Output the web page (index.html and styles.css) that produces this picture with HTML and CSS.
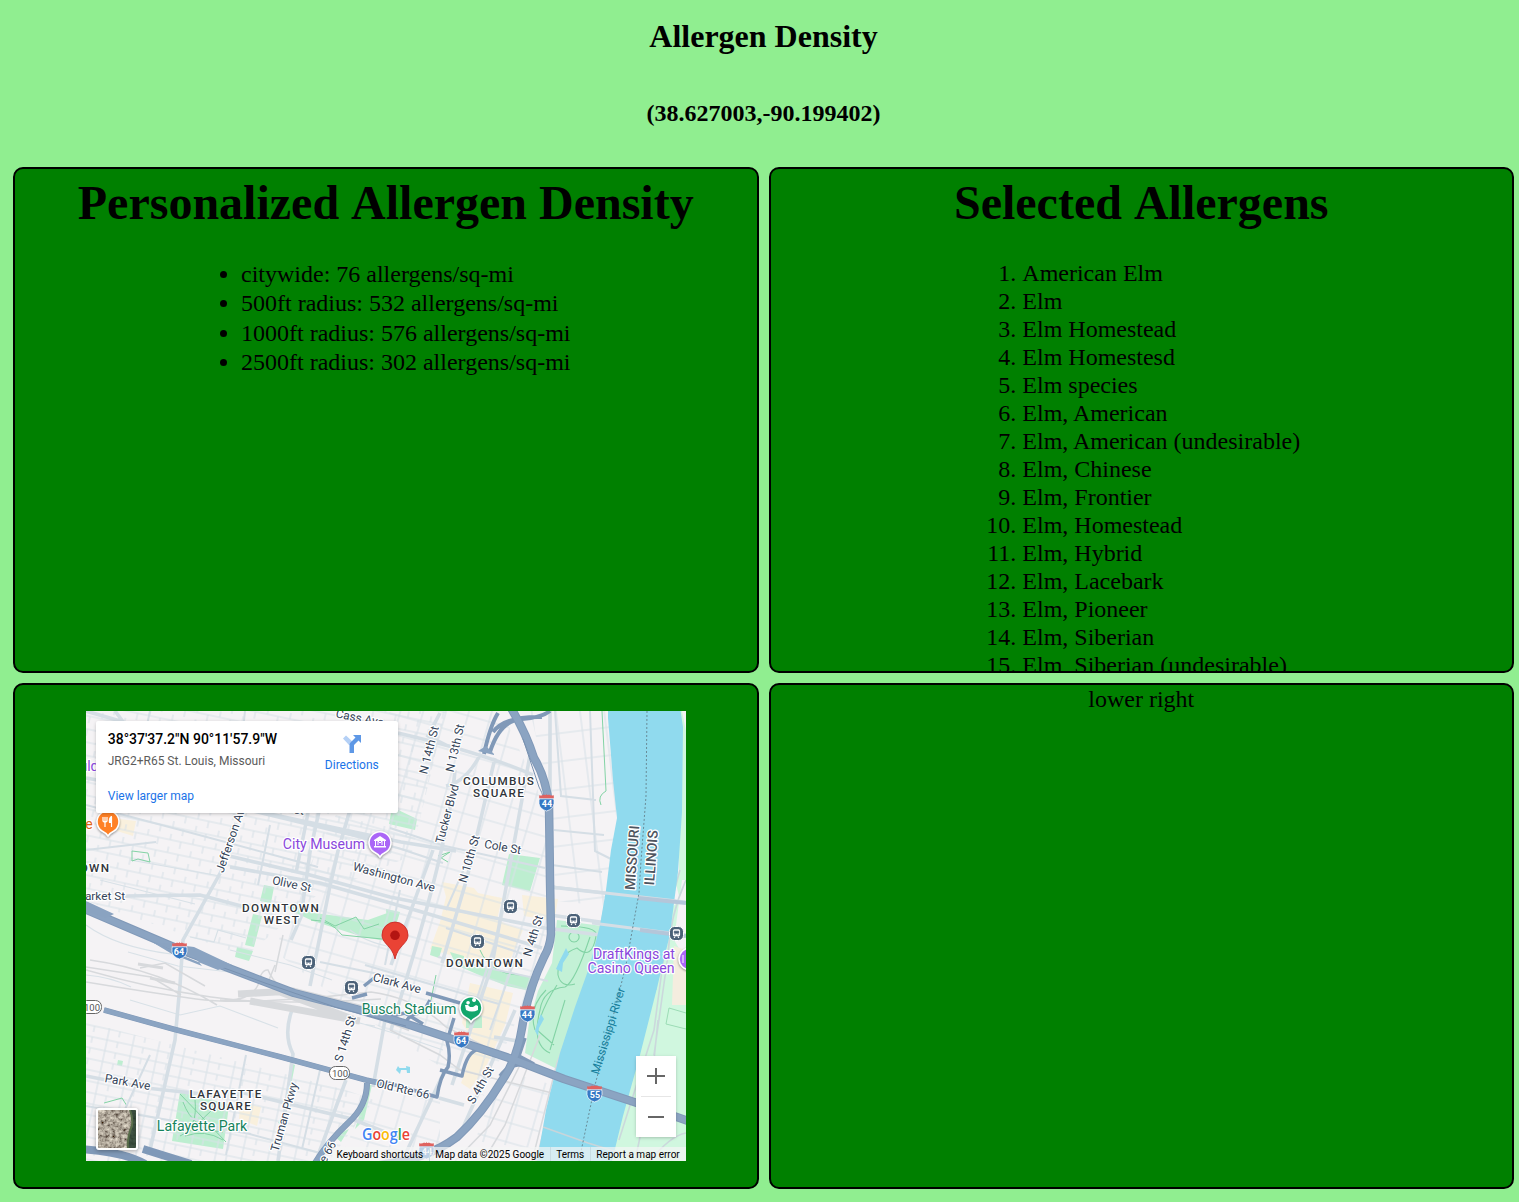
FILE: index.html
```html
<!DOCTYPE html>
<html lang="en">
<head>
<meta charset="utf-8">
<title>Allergen Density</title>
<link rel="stylesheet" href="styles.css">
</head>
<body>
<header class="page-header">
  <h1>Allergen Density</h1>
  <h2>(38.627003,-90.199402)</h2>
</header>
<main class="grid">
  <section class="panel">
    <h1>Personalized Allergen Density</h1>
    <ul class="density">
      <li>citywide: 76 allergens/sq-mi</li>
      <li>500ft radius: 532 allergens/sq-mi</li>
      <li>1000ft radius: 576 allergens/sq-mi</li>
      <li>2500ft radius: 302 allergens/sq-mi</li>
    </ul>
  </section>
  <section class="panel">
    <h1>Selected Allergens</h1>
    <ol class="allergens">
      <li>American Elm</li><li>Elm</li><li>Elm Homestead</li><li>Elm Homestesd</li><li>Elm species</li>
      <li>Elm, American</li><li>Elm, American (undesirable)</li><li>Elm, Chinese</li><li>Elm, Frontier</li><li>Elm, Homestead</li>
      <li>Elm, Hybrid</li><li>Elm, Lacebark</li><li>Elm, Pioneer</li><li>Elm, Siberian</li><li>Elm, Siberian (undesirable)</li>
    </ol>
  </section>
  <section class="panel map-panel">
    <div class="map">
      <svg class="map-canvas" width="600" height="450" viewBox="86 711 600 450">
        <defs>
          <pattern id="gridNW" width="23" height="13" patternUnits="userSpaceOnUse" patternTransform="rotate(12)"><path d="M0 6H23M7 6V13M19 0V6" class="minor"/></pattern>
          <pattern id="gridDT" width="22" height="19" patternUnits="userSpaceOnUse" patternTransform="rotate(16)"><path d="M0 8H22M9 0V19" class="minor"/></pattern>
          <pattern id="gridS" width="26" height="11" patternUnits="userSpaceOnUse" patternTransform="rotate(12)"><path d="M0 5H26M9 0V11M20 5V11" class="minor"/></pattern>
          <pattern id="gridE" width="24" height="28" patternUnits="userSpaceOnUse" patternTransform="rotate(-7)"><path d="M0 12H24M9 0V28" class="minor"/></pattern>
          <filter id="aerial" x="0" y="0" width="1" height="1">
            <feTurbulence type="fractalNoise" baseFrequency=".28" numOctaves="4" seed="8"/>
            <feColorMatrix values="1.1 0 0 0 -.12  1.05 0 0 0 -.14  .9 0 0 0 -.13  0 0 0 0 1"/>
          </filter>
          <g id="station"><rect x="-7" y="-7" width="14" height="14" rx="5" fill="#4b6178" stroke="#fff" stroke-width="1"/><rect x="-3.6" y="-4.2" width="7.2" height="7" rx="1.500" fill="#fff"/><path d="M-2.2-2.300h4.400v2h-4.400zM-2 1h1M1 1h1" stroke="#4b6178" fill="#4b6178" stroke-width=".8"/><path d="M-2.500 4.400l1.200-1.400M2.500 4.400l-1.200-1.400" stroke="#fff" stroke-width="1.100"/></g>
          <g id="shield"><path d="M-7-5q3 1.300 7-1.500 4 2.800 7 1.500 .7 3 .5 6Q7 6.500 0 8.500-7 6.500-7.500 1q-.2-3 .5-6z" fill="#3578c4" stroke="#fff" stroke-width=".7"/><path d="M-7.300-7.300q2.500 1 5-.8 2 1.300 2.300-.7.300 2 2.300.7 2.500 1.800 5 .8v3.200H-7.300z" fill="#df6260"/><path d="M-7.300-3.700H7.300" stroke="#fff" stroke-width=".8"/></g>
        </defs>
        <path fill="#f5f3f5" d="M86 711h600v450H86z"/>

        <g fill="#f9f0dd">
          <path d="M119 819l17 2-3 15-16-5zM442 882l32 6 4 5 24 5-5 22 12 5 14 5-12 28-14 4-8-4-13 5-46-14 10-27 6-25zM522 895l36 4-4 22-30-5zM470 983l43 10-8 32-20 44-15 20-9-6 14-40-13-20zM240 1102l21 5-4 19-18-7z"/>
        </g>
        <g fill="#bdeed0">
          <path d="M264 885l10 2-3 16-11-2zM253 914l9 2-8 31-9-2zM237 947l16 4-4 10-14-4zM287 905l27 8 54 7 22-8-4 29-23-4-50-16-24-11zM386 909l14 3-4 13-9-2z"/>
          <path d="M509 854l31 4-10 33-28-6zM392 807l25 12-2 11-26-6zM432 946l10 2-3 10-9-3zM450 952l14 4 0 10 30 3 29 6 15 5-3 12-28-6-28-11-23-10z"/>
          <path d="M180 1092l48 12v9l-5 36-51-8zM466 1016h16v12h-16zM118 1060l5 1-1 5-5-1zM290 1063l5 2-4 20-3-1zM288 1105l-4 20-6-2zM369 1085h3l-8 35-9 9zM349 1129l-8 13-7-6z"/>
        </g>
        <path fill="url(#gridNW)" d="M86 711h360l-35 145-95 40-70 60-160-55z"/>
        <path fill="url(#gridDT)" d="M390 711h112l45 100v120l-18 60-45 105-90-60-40-25-80-60 38-90z"/>
        <path fill="url(#gridS)" d="M86 1022l260 68 28 10-45 61H86z"/>
        <path fill="url(#gridE)" d="M530 711h78l8 80v60l-10 55-50-5-5-100z"/>
        <path fill="url(#gridDT)" d="M370 1090h70v70h-100zM500 1070l50 14-15 65-60-8z"/>
        <path fill="none" class="minor" d="M86 925q30 22 85 29M190 937l24 5 4-12 28 8M100 880l95 24M350 930q20 15 50 18M86 975q25 2 45 12M230 950l60 15 42 15M130 1000l50 15 40-9 58 22M350 1020l40 12 53 18M300 1000q35 20 75 26M130 860l90 16M128 952l50 14 60 7"/>

        <path fill="#c3f1d6" d="M557 920l45 6-8 35-17 44-18 65-34-17 4-30 9-32 14-28z"/>
        <path fill="none" stroke="#83d3a5" stroke-width="1.100" d="M561 926q38 0 35 10-4 25-19 12-20 7-19 27 3 13 17 9M557 985q-15 22-20 45l17 15M574 932a5 5 0 1 0 .1 0M590 937q-15 45-25 50-22 2-25 23-9 35 10 43M565 1000l-15 50M546 990q-18 18-11 40"/>
        <path fill="#90daee" d="M566 948l3 6-6 9-1 9-6-3 4-9zM541 1014l3 5-5 9-1 8-3-5 3-10zM398 1066l3 4-1 4-4-4zM406 1066l4 1v6h-3zM398 1068h9v2h-9z"/>
        <path fill="none" stroke="#83d3a5" d="M602 711l4 80q-9 5-5 14M132 851l16 2 2 9-12-3-6 2zM183 1102q10 28 40 30M195 1100q3 28-15 36M180 1094l46 48M215 1107l-30 29q20-7 38 4M320 918l15 8 21-9 8 12 15-5M311 920q20 0 31 15l40 4M104 1103l18-5 5 8M480 950q10 24 40 25M436 975l-5 25M438 860l12-8-12 4 10 6"/>

        <g fill="none" stroke="#d5dee5" stroke-width="3.600">
          <path d="M86 778l105 19 210 45 55 9M86 711l41 12M115 711l12 16M220 803l150 36M225 855l85 20 80 22 155 31 95 12M230 867l90 16 102 29 120 36M125 896l75-1 45 12M236 823l-13 45-40 72-3 45-5 55-25 110M308 813l-12 60M320 807l-10 45-9 65-10 23M390 728l-35 65-17 58-8 35-20 100M398 733q85 20 135 42M440 713l-12 23 20 10M480 755q-14 27-34 31M455 770q-5 60-40 180l-24 80M433 850l-42 115M495 758l-28 120-25 85M530 755l-38 210-40 120M550 711v90M549 880q0 8 10 8l127 14M550 915l50 7 86 12M518 1041l-24-4"/>
          <path d="M86 1076l60 12 75 8M232 1090l120 29 48 19M292 1010q-9 25 1 44l-15 107M346 1080l-30 81M385 1020l-12 67M445 1070l-40 85M439 1098l25 7M515 1010l-53 120"/>
        </g>
        <path fill="none" stroke="#d5dee5" stroke-width="2" d="M86 805l102 27 130 35M86 850l70-8M150 711l-15 70M245 711l-7 65M333 830l65 18 45 15M270 825l-12 60M390 828l55 18 100 22M400 890l-15 75M446 928l83 28M438 957l110 24M365 965l44 13 90 26M320 962l78 16M470 855l-24 55M555 711l6 85 35 4M590 711l5 140 20 10M554 830l50 5M552 865l50 7M86 1106l165 28M190 1118l130 35M150 1055l-30 65M246 1055l-20 100M320 1070l-18 79M498 935l-25 75M520 945l-30 85"/>
        <g fill="none" stroke="#d7d9dc">
          <path stroke-width="1.500" d="M86 970q62 18 125 27t170 2M86 982q60 10 110 17t175-7q45 6 75 35l40 20M90 960q70 10 127 45M140 968l25-5 40 23M86 967l65 10 30 18M220 1000q30 2 38-15 3-16 10-15 8 20 35 28"/>
          <path stroke-width="3" d="M138 964l25 4M150 978l25 5"/>
          <path stroke-width="7" d="M238 994l55-3 67 17 50 20M250 1001l110 20M280 992l78 29"/>
          <path stroke-width="1.500" d="M608 890l-18 85-33 88-25 98M612 890l-18 85-33 88-25 98M390 1030l50 25 20 15 100 25M540 1035l-35 90-15 25M520 1065l-30 60-35 36M283 935l-8 37M275 965l-8 20"/>
        </g>
        <path fill="#d0f7df" d="M677 711h9v450H600l25-90 40-145 14-55z"/>
        <path fill="#f5f3f5" d="M682 711h4v20zM682 880h4v80l-12-20zM669 910l6-30 5 20z"/>
        <path fill="#f4eddf" d="M674 946l12 4v55h-14z"/>
        <path fill="none" stroke="#cbd8dc" stroke-width="1.600" d="M675 860l-9 80-12 90-35 110M686 880q-16 35-18 75l-14 100M680 870q-18 60-24 120M658 1020l-8 80M640 1137l-5 24M650 1161q20-25 36-28"/>
        <path fill="none" stroke="#9bdcb5" d="M669 1008l17 5M666 1024l20 5M669 1008l-3 16"/>
        <path fill="#90daee" d="M608 711v7l5 62 4 38-6 32-5 40-6 35-10 40-15 42-15 46-14 57-9 51h75l11-45 17-61 16-63 14-58 8-62 4-60 1-85-4-27z"/>
        <g fill="none" stroke="#d5dee5" stroke-width="3"><path d="M552 887l134 15"/><path d="M592 923l94 12"/></g>
        <path fill="none" stroke="#b4c6d9" stroke-width="4" d="M638 898l48 5M640 930l46 6"/>
        <path fill="none" stroke="#c8d5da" stroke-width="1.500" d="M543 1127l45 16 45 14"/>
        <path fill="none" stroke="#698c98" stroke-dasharray="2 2" d="M647 711l-1 85-5 65-2 32-13 72-13 52-18 68-16 76"/>

        <g fill="none" stroke="#8099b8" stroke-linejoin="round">
          <path stroke-width="4" d="M498 713q-8 13-14 41M490 752q10-32 32-33 19-1 28-8M493 732q12-16 49-15"/>
          <path stroke-width="3.500" d="M388 1083l49 14q3-21 11-30 3-13-1-26l7-23M426 993l34 10M430 1000l-5 9M422 1013q-13 0-17 11M440 1070l22 6q5-26 18-27M374 978l-10 8M352 998l15-4M500 1076q10-15 32-10M525 1038l-6 18 15 8M388 1017l17-4 18 11"/>
          <path stroke-width="8.500" d="M511 708q15 25 23 50 12 20 15 47l1 75 1 54q-1 13-7 23-16 33-22 71-5 31-19 51-21 35-46 58-29 22-77 28"/>
          <path stroke-width="8.500" d="M82 908l94 40 76 29 42 16 62 16 51 15 45 15 60 20 52 20 70 23 60 21"/>
          <path stroke-width="5.500" d="M104 1010l69 19 108 28 85 23 18 4"/>
          <path stroke-width="6" d="M367 1083q0 23-19 40-23 22-36 45"/>
          <path stroke-width="8" d="M80 1149q45 3 65 15M143 1149l48 15"/>
        </g>
        <g fill="none" stroke="#8ba4c2">
          <path stroke-width="6.500" d="M511 708q15 25 23 50 12 20 15 47l1 75 1 54q-1 13-7 23-16 33-22 71-5 31-19 51-21 35-46 58-29 22-77 28"/>
          <path stroke-width="6.500" d="M82 908l94 40 76 29 42 16 62 16 51 15 45 15 60 20 52 20 70 23 60 21"/>
          <path stroke-width="4.500" d="M104 1010l69 19 108 28 85 23 18 4M367 1083q0 23-19 40-23 22-36 45"/>
          <path stroke-width="1" stroke="#7992b1" d="M523 739l16 48q6 10 6 24M205 961l60 22 70 24 71 19"/>
        </g>
        <path fill="#8aa3c1" d="M478 751l8-5 8 8v1zM155 942l39 5 38 18-14 5-32-13zM152 942l20 12 30 12-8-10zM86 901l28 13-8 4-20-7z"/>

        <g class="road-label">
          <text transform="translate(359 722) rotate(11)">Cass Ave</text>
          <text transform="translate(433 751) rotate(-76)">N 14th St</text>
          <text transform="translate(459 749) rotate(-77)">N 13th St</text>
          <text transform="translate(451 815) rotate(-75)">Tucker Blvd</text>
          <text transform="translate(473 860) rotate(-74)">N 10th St</text>
          <text transform="translate(502 851) rotate(10)">Cole St</text>
          <text transform="translate(393 881) rotate(15)">Washington Ave</text>
          <text transform="translate(291 888) rotate(12)">Olive St</text>
          <text transform="translate(235 839) rotate(-71)">Jefferson Ave</text>
          <text transform="translate(105 900)">arket St</text>
          <text transform="translate(537 937) rotate(-73)">N 4th St</text>
          <text transform="translate(396 987) rotate(15)">Clark Ave</text>
          <text transform="translate(349 1040) rotate(-73)">S 14th St</text>
          <text transform="translate(288 1118) rotate(-74)">Truman Pkwy</text>
          <text transform="translate(127 1086) rotate(10)">Park Ave</text>
          <text transform="translate(402 1093) rotate(13)">Old Rte 66</text>
          <text transform="translate(484 1087) rotate(-60)">S 4th St</text>
          <text transform="translate(331 1154) rotate(-60)">e 66</text>
          <text transform="translate(293 813) rotate(10)">C St</text>
        </g>
        <g class="area-label">
          <text x="499" y="785">COLUMBUS</text><text x="499" y="797">SQUARE</text>
          <text x="281" y="912">DOWNTOWN</text><text x="282" y="924">WEST</text>
          <text x="485" y="967">DOWNTOWN</text><text x="95" y="872">OWN</text>
          <text x="226" y="1098">LAFAYETTE</text><text x="226" y="1110">SQUARE</text>
        </g>
        <g class="state-label"><text transform="translate(637 858) rotate(-86)">MISSOURI</text><text transform="translate(656 858) rotate(-86)">ILLINOIS</text></g>
        <text class="river-label" transform="translate(612 1032) rotate(-73)">Mississippi River</text>
        <g class="place purple"><text x="324" y="849">City Museum</text><text x="634" y="959">DraftKings at</text><text x="631" y="973">Casino Queen</text><text x="89" y="771">uld</text></g>
        <g class="place green"><text x="409" y="1014">Busch Stadium</text><text x="202" y="1131">Lafayette Park</text></g>
        <text class="place orange" x="89" y="829">e</text>

        <use href="#station" x="510.500" y="906.500"/><use href="#station" x="573.500" y="920.500"/><use href="#station" x="477.500" y="941.500"/><use href="#station" x="676.500" y="933.500"/><use href="#station" x="308.500" y="962.500"/><use href="#station" x="351.500" y="987.500"/>
        <use href="#shield" x="546.500" y="802.500"/><use href="#shield" x="179.500" y="950.500"/><use href="#shield" x="527.500" y="1013.500"/><use href="#shield" x="461.500" y="1039.500"/><use href="#shield" x="594.500" y="1093.500"/><use href="#shield" x="426.500" y="1150.500"/>
        <g class="shield-number"><text x="547" y="807">44</text><text x="179" y="955">64</text><text x="527" y="1018">44</text><text x="461" y="1044">64</text><text x="595" y="1098">55</text><text x="427" y="1155">44</text></g>
        <g fill="#fff" stroke="#666"><rect x="329.500" y="1066.500" width="20" height="13" rx="6"/><rect x="80.500" y="1000.500" width="21" height="13" rx="6"/></g>
        <g class="route-number"><text x="340" y="1076.500">100</text><text x="92" y="1010.500">100</text></g>

        <g class="poi">
          <path fill="#ff8126" d="M108 836q-2-3-6-5a11 11 0 1 1 12 0q-4 2-6 5z"/><path fill="#aa66f7" d="M380 857q-2-3-6-5a11 11 0 1 1 12 0q-4 2-6 5z"/><path fill="#13a66c" d="M471 1022q-2-3-6-5a11 11 0 1 1 12 0q-4 2-6 5z"/><circle fill="#aa66f7" cx="690" cy="959" r="11"/>
        </g>
        <path fill="none" stroke="#fff" stroke-width="1.200" d="M103 817v4q2 2 4 0v-4M105 817v10M111.500 817v10"/><path fill="#fff" d="M111 816q-3 2-2 7h3v-7z"/>
        <path fill="#fff" d="M374 840l6-4 6 4v1h-12zM374 846h12v1.500h-12z"/><path fill="none" stroke="#fff" d="M375.500 840v6M384.500 840v6M378 845v-4l2 2 2-2v4"/>
        <path fill="#fff" d="M465 1005l3 0 2 2 3 0 3-2 2 1v4q-6 3-12 0zM474 1002a2 2 0 1 1 .1 0zM468 1004.500a1.800 1.800 0 1 1 .1 0z"/><path stroke="#fff" d="M683 955v8"/>
        <path fill="#ea4335" stroke="#c5221f" stroke-width=".8" d="M395 959c-1.500-6-3.500-9-6-12-3.500-4-7-7-7-12a13 13 0 0 1 26 0c0 5-3.500 8-7 12-2.500 3-4.500 6-6 12z"/><circle fill="#b31412" cx="395" cy="935.300" r="4.800"/>
        <text class="google" x="362" y="1140" textLength="48" lengthAdjust="spacingAndGlyphs"><tspan fill="#4285f4">G</tspan><tspan fill="#ea4335">o</tspan><tspan fill="#fbbc05">o</tspan><tspan fill="#4285f4">g</tspan><tspan fill="#34a853">l</tspan><tspan fill="#ea4335">e</tspan></text>
      </svg>

      <div class="place-card">
        <div class="place-info">
          <strong>38°37'37.2"N 90°11'57.9"W</strong>
          <span class="address">JRG2+R65 St. Louis, Missouri</span>
          <span class="link">View larger map</span>
        </div>
        <div class="directions">
          <svg width="20" height="20" viewBox="0 0 20 20"><path fill="#b4d0f6" d="M4 1.500L1 4.500l6 6.500h5V9z"/><path fill="#5e98e6" d="M11 1h8v8l-2.500-2.500L12 11v8H7.500v-8q0-1.500 1-2.500l5-5z"/></svg>
          <span class="link">Directions</span>
        </div>
      </div>
      <div class="zoom-control"><span class="plus"></span><span class="divider"></span><span class="minus"></span></div>
      <div class="satellite"><svg width="38" height="38"><rect width="38" height="38" filter="url(#aerial)"/><path fill="#263d2e" opacity=".85" d="M32 0q3 8 2 16-5 11-4 22h8V0z"/><path fill="none" stroke="#576c49" stroke-width="2" d="M32 0q3 8 2 16-5 11-4 22"/></svg></div>
      <div class="attribution"><span>Keyboard shortcuts</span><span>Map data ©2025 Google</span><span>Terms</span><span>Report a map error</span></div>
    </div>
  </section>
  <section class="panel">lower right</section>
</main>
</body>
</html>
```
FILE: styles.css
```css
* { box-sizing: border-box; }
body { margin: 0 0 0 8px; background: lightgreen; color: #000; font-family: "Liberation Serif", "Times New Roman", serif; }
.page-header { height: 162px; padding-top: 18px; text-align: center; }
.page-header h1 { margin: 0 0 45px; font-size: 32px; line-height: 36px; }
.page-header h2 { margin: 0; font-size: 24px; line-height: 28px; }
.grid { display: grid; grid-template-columns: 1fr 1fr; grid-template-rows: 506px 506px; gap: 10px; padding: 5px 5px 13px; }
.panel { min-width: 0; overflow: hidden; border: 2px solid #000; border-radius: 10px; background: green; text-align: center; font-size: 24px; line-height: 28px; }
.panel h1 { margin: 6px 0 29px; font-size: 48px; line-height: 55px; font-kerning: none; }
.panel ul, .panel ol { display: inline-block; margin: 0; padding: 0 0 0 40px; text-align: left; }
.panel .density { margin-top: 1px; line-height: 29.33px; }
.map-panel { display: flex; align-items: center; justify-content: center; }
.map { position: relative; width: 600px; height: 450px; overflow: hidden; font-family: Roboto, sans-serif; text-align: left; }
.map-canvas { display: block; }
.minor { fill: none; stroke: #d8e1e7; stroke-width: 1.1; }
.map-canvas text { text-anchor: middle; paint-order: stroke; stroke: #fff; stroke-width: 2.5px; stroke-linejoin: round; font-family: Roboto, sans-serif; }
.road-label { fill: #344358; font-size: 11.8px; }
.area-label { fill: #30343a; font-size: 11.7px; font-weight: 500; letter-spacing: 1.3px; }
.state-label { fill: #4d5560; font-size: 14px; font-weight: 500; }
.map-canvas .river-label { fill: #167f9c; stroke: none; font-size: 12px; }
.place { font-size: 14.1px; }
.purple { fill: #8a47dc; }
.green { fill: #16835d; }
.orange { fill: #df6615; }
.map-canvas .shield-number text { fill: #fff; stroke: none; font-size: 9px; font-weight: 700; }
.map-canvas .route-number text { fill: #555; stroke: none; font-size: 9.5px; }
.poi { stroke: #fff; stroke-width: 1.6px; filter: drop-shadow(0 1px 1px #0006); }
.map-canvas .google { text-anchor: start; font-family: "Open Sans", sans-serif; font-size: 17px; font-weight: 600; }
.place-card { position: absolute; top: 10px; left: 10px; display: flex; justify-content: space-between; width: 302px; height: 92px; padding: 10px 19px 9px 12px; background: #fff; border-radius: 2px; box-shadow: 0 1px 4px -1px #0005; font-size: 12px; line-height: 16px; }
.place-info { display: flex; flex-direction: column; }
.place-info strong { font-size: 14px; font-weight: 500; }
.address { margin-top: 6px; color: #5b5b5b; }
.place-info .link { margin-top: 19px; }
.link { color: #1a73e8; }
.directions { display: flex; flex-direction: column; align-items: center; padding-top: 3px; }
.directions .link { margin-top: 3px; }
.zoom-control { position: absolute; left: 550px; top: 345px; display: flex; flex-direction: column; align-items: center; width: 40px; height: 81px; padding-top: 12px; background: #fff; box-shadow: 0 1px 4px -1px #0005; }
.plus { width: 18px; height: 16px; background: linear-gradient(#666, #666) center / 18px 2px no-repeat, linear-gradient(#666, #666) center / 2px 16px no-repeat; }
.divider { width: 30px; height: 1px; margin: 12px 0 19px; background: #e6e6e6; }
.minus { width: 16px; height: 2px; background: #666; }
.satellite { position: absolute; left: 10px; top: 397px; width: 42px; height: 42px; border: 2px solid #fff; border-radius: 3px; box-shadow: 0 1px 4px #0005; line-height: 0; overflow: hidden; }
.attribution { position: absolute; right: 0; bottom: 0; display: flex; height: 14px; background: #f5f5f5b3; font-size: 10px; line-height: 15px; white-space: nowrap; }
.attribution span { padding: 0 6px 0 5px; }
.attribution span + span { border-left: 1px solid #c8dce3; }
```
